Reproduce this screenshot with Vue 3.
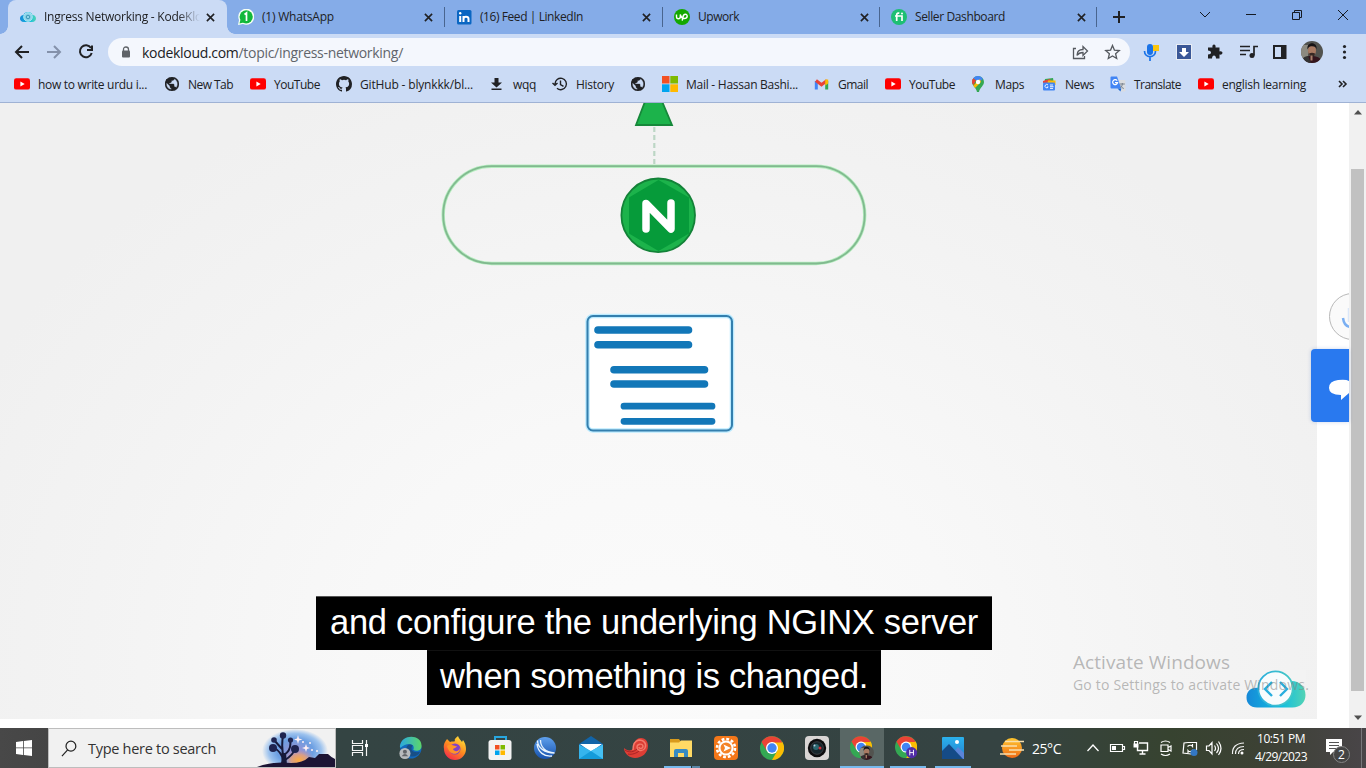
<script setup>
const vFit = {
  mounted(el, { value }) {
    if (!value) return
    const natural = el.getBoundingClientRect().width
    el.style.letterSpacing = (value - natural) / el.textContent.length + 'px'
  },
}

const tabs = [
  { icon: 'kode', title: 'Ingress Networking - KodeKlo', fit: 158, width: 219, active: true },
  { icon: 'whatsapp', title: '(1) WhatsApp', fit: 72, width: 218 },
  { icon: 'linkedin', title: '(16) Feed | LinkedIn', fit: 103, width: 218 },
  { icon: 'upwork', title: 'Upwork', fit: 41, width: 217 },
  { icon: 'fiverr', title: 'Seller Dashboard', fit: 90, width: 217 },
]

const bookmarks = [
  { icon: 'youtube', label: 'how to write urdu i...', fit: 109, width: 150 },
  { icon: 'globe', label: 'New Tab', fit: 45, width: 86 },
  { icon: 'youtube', label: 'YouTube', fit: 46, width: 86 },
  { icon: 'github', label: 'GitHub - blynkkk/bl...', fit: 113, width: 153 },
  { icon: 'download', label: 'wqq', fit: 23, width: 63 },
  { icon: 'history', label: 'History', fit: 38, width: 78 },
  { icon: 'globe', label: '', fit: 0, width: 32 },
  { icon: 'microsoft', label: 'Mail - Hassan Bashi...', fit: 112, width: 152 },
  { icon: 'gmail', label: 'Gmail', fit: 30, width: 71 },
  { icon: 'youtube', label: 'YouTube', fit: 46, width: 86 },
  { icon: 'maps', label: 'Maps', fit: 29, width: 70 },
  { icon: 'news', label: 'News', fit: 29, width: 69 },
  { icon: 'translate', label: 'Translate', fit: 47, width: 88 },
  { icon: 'youtube', label: 'english learning', fit: 84, width: 127 },
]

const apps = [
  { icon: 'edge' }, { icon: 'firefox' }, { icon: 'store' }, { icon: 'waves' },
  { icon: 'mail' }, { icon: 'shell' }, { icon: 'explorer', state: 'stacked' },
  { icon: 'sun' }, { icon: 'chrome' }, { icon: 'camera' },
  { icon: 'chrome-user', state: 'current' }, { icon: 'chrome-h', state: 'open' },
  { icon: 'photos', state: 'open' },
]

const tray = ['chevron', 'battery', 'network', 'meet', 'sync', 'speaker', 'wifi']
</script>

<template>
  <div class="screen">
    <svg class="defs" width="0" height="0">
      <defs>
        <linearGradient id="g-cloud" x1="0" x2="1"><stop offset="0" stop-color="#1689d8" /><stop offset=".6" stop-color="#12bfe0" /><stop offset="1" stop-color="#53d3b4" /></linearGradient>
        <linearGradient id="g-ring" x1="0" x2="1"><stop offset="0" stop-color="#2aaede" /><stop offset="1" stop-color="#45c9c4" /></linearGradient>
        <linearGradient id="g-edge" x1="0" x2="1"><stop offset="0" stop-color="#2aa8e0" /><stop offset="1" stop-color="#5cd66a" /></linearGradient>
        <linearGradient id="g-fox" x1=".8" y1="0" x2=".2" y2="1"><stop offset="0" stop-color="#ffe63c" /><stop offset=".5" stop-color="#ff8a1f" /><stop offset="1" stop-color="#f4234f" /></linearGradient>
        <linearGradient id="g-wave" x1="0" y1="0" x2="0" y2="1"><stop offset="0" stop-color="#5fa0ec" /><stop offset="1" stop-color="#1551ad" /></linearGradient>
        <linearGradient id="g-photo" x1="0" y1="0" x2="0" y2="1"><stop offset="0" stop-color="#2bb1ec" /><stop offset="1" stop-color="#2380d0" /></linearGradient>
        <linearGradient id="g-sun" x1="0" y1="0" x2="0" y2="1"><stop offset="0" stop-color="#ffc62e" /><stop offset="1" stop-color="#ef6a17" /></linearGradient>
        <radialGradient id="g-sky"><stop offset="0" stop-color="#9d8fd0" /><stop offset=".55" stop-color="#6c9fe2" /><stop offset=".8" stop-color="#9cc2ee" /><stop offset="1" stop-color="#f1f1f1" /></radialGradient>
        <radialGradient id="g-dusk"><stop offset="0" stop-color="#ffab3d" /><stop offset=".5" stop-color="#f0a070" stop-opacity=".8" /><stop offset="1" stop-color="#c08fc0" stop-opacity="0" /></radialGradient>
        <clipPath id="c-face"><circle cx="11" cy="11" r="11" /></clipPath>
      </defs>
      <symbol id="kode" viewBox="0 0 60 40"><path d="M11 37.500C4 37.500 .5 33 .5 27.500c0-6 4-10 11.500-10C14 7 20 .5 29.500 .5c8 0 14 4 16 10.500 8 0 14 6 14 14 0 7-5 12.500-13 12.500z" fill="url(#g-cloud)" /><path d="M-2-4H62V10.500H45L29.500 18 12 17.500H-2z" fill="#f3f3f3" /><circle cx="29.500" cy="18.500" r="17.200" fill="#f8fcfd" stroke="url(#g-ring)" stroke-width="1.800" /><path d="m26 12-7 7 7 7m8-14 7 7-7 7" fill="none" stroke="#27aede" stroke-width="2.400" /></symbol>
      <symbol id="kode-tab" viewBox="0 0 16 16"><path d="M4 13C1 13 0 11 0 9.500c0-2 1.500-3.500 3.500-3.500C4 4 6 3 8 3s4 1 4.500 3C15 6 16 8 16 9.500S15 13 12 13z" fill="url(#g-cloud)" /><circle cx="8" cy="8" r="4.300" fill="#8ed4ea" stroke="#a8e7f1" /><circle cx="8" cy="8" r="1.800" fill="none" stroke="#3a95b5" /></symbol>
      <symbol id="whatsapp" viewBox="0 0 16 16"><path d="M0 16 1 11A8 8 0 1 1 5 15z" fill="#f5fff5" /><circle cx="8.200" cy="7.800" r="6.600" fill="#12b83b" /><path d="m1.500 14.500 1-4 3 3z" fill="#12b83b" /><path d="m6.500 5.500 2-1.500v8" fill="none" stroke="#fff" stroke-width="1.700" /></symbol>
      <symbol id="linkedin" viewBox="0 0 16 16"><rect x="1" y="1" width="14.500" height="14.500" rx="1.500" fill="#0a66c2" /><path d="M4.200 7v6M7.500 13V7m0 3c0-3 5-3 5 0v3" fill="none" stroke="#fff" stroke-width="2" /><circle cx="4.200" cy="4.300" r="1.200" fill="#fff" /></symbol>
      <symbol id="upwork" viewBox="0 0 16 16"><circle cx="8" cy="8" r="8" fill="#14a800" /><path d="M2.500 5.500v2.300c0 2.600 3.800 2.600 3.800 0V5.500C7 8 8 9.500 10.200 9.500c3.800 0 3.800-4.300 1-4.300-2 0-2.300 2-3 6.500" fill="none" stroke="#fff" stroke-width="1.400" /></symbol>
      <symbol id="fiverr" viewBox="0 0 16 16"><circle cx="8" cy="8" r="8" fill="#1dbf73" /><path d="M5.700 12V6.300C5.700 4 7 4 8.300 4.200M4 7h7v5" fill="none" stroke="#fff" stroke-width="1.700" /><circle cx="11" cy="4.500" r="1" fill="#fff" /></symbol>
      <symbol id="youtube" viewBox="0 0 16 16"><rect y="2.300" width="16" height="11.300" rx="2.200" fill="#f00" /><path d="m6.400 5.400 4.300 2.600-4.300 2.600z" fill="#fff" /></symbol>
      <symbol id="globe" viewBox="2 2 20 20"><path d="M12 2C6.480 2 2 6.480 2 12s4.480 10 10 10 10-4.480 10-10S17.520 2 12 2zm-1 17.930c-3.950-.49-7-3.850-7-7.930 0-.62.08-1.210.21-1.790L9 15v1c0 1.100.9 2 2 2v1.930zm6.900-2.540c-.26-.81-1-1.390-1.900-1.390h-1v-3c0-.55-.45-1-1-1H8v-2h2c.55 0 1-.45 1-1V7h2c1.100 0 2-.9 2-2v-.41c2.930 1.190 5 4.060 5 7.410 0 2.080-.8 3.970-2.100 5.390z" fill="#202124" stroke="#202124" stroke-width=".5" /><path d="M4 5h7v4l-3 2-5-1z" fill="#202124" /></symbol>
      <symbol id="github" viewBox="0 0 16 16"><path fill="#202124" d="M8 0C3.580 0 0 3.580 0 8c0 3.540 2.290 6.530 5.470 7.590.4.070.55-.17.55-.38 0-.19-.01-.82-.01-1.490-2.010.37-2.530-.49-2.690-.94-.09-.23-.48-.94-.82-1.130-.28-.15-.68-.52-.01-.53.63-.01 1.080.58 1.230.82.72 1.210 1.870.87 2.330.66.07-.52.28-.87.51-1.070-1.780-.2-3.640-.89-3.640-3.950 0-.87.31-1.590.82-2.150-.08-.2-.36-1.020.08-2.120 0 0 .67-.21 2.200.82a7.600 7.600 0 0 1 4 0c1.530-1.040 2.200-.82 2.200-.82.44 1.100.16 1.920.08 2.120.51.56.82 1.270.82 2.150 0 3.070-1.870 3.750-3.650 3.950.29.25.54.73.54 1.480 0 1.070-.01 1.930-.01 2.200 0 .21.15.46.55.38A8 8 0 0 0 16 8c0-4.420-3.580-8-8-8z" /></symbol>
      <symbol id="download" viewBox="0 0 16 16"><path d="M5.500 2h4v4.500H13L7.500 11.500 2 6.500h3.500zM2.500 12.500h10V14h-10z" fill="#202124" /></symbol>
      <symbol id="history" viewBox="0 0 16 16"><path d="M3 8a5.700 5.700 0 1 1 2 4.300M.5 7 3 9.300 5.500 7M8.500 4.500v4l3 1.800" fill="none" stroke="#202124" stroke-width="1.400" /></symbol>
      <symbol id="microsoft" viewBox="0 0 16 16"><path fill="#f25022" d="M0 0h7.500v7.500H0z" /><path fill="#7fba00" d="M8.300 0H16v7.500H8.300z" /><path fill="#00a4ef" d="M0 8.300h7.500V16H0z" /><path fill="#ffb900" d="M8.300 8.300H16V16H8.300z" /></symbol>
      <symbol id="gmail" viewBox="0 0 16 16"><path d="M2.300 13.500V5" stroke="#4285f4" stroke-width="3" /><path d="M12.700 13.500V5" stroke="#34a853" stroke-width="3" /><path d="m2 4.500 5.500 4.300L13 4.500" fill="none" stroke="#ea4335" stroke-width="3" /><path d="M11.200 3.500h3v4l-3 2z" fill="#fbbc04" /></symbol>
      <symbol id="maps" viewBox="0 0 16 16"><path d="M7 0a6 6 0 0 0-6 6c0 4 4 5 5 10h2c1-5 5-6 5-10a6 6 0 0 0-6-6" fill="#34a853" /><path d="M1 6a6 6 0 0 1 1.400-4L5 4.500 2.500 9Q1 8 1 6" fill="#ea4335" /><path d="M2.200 2.200A6 6 0 0 1 12 3L8 6z" fill="#4285f4" /><path d="M2.300 9.400 9 3l1 3-6 6z" fill="#fbbc04" /><circle cx="7" cy="6" r="2.200" fill="#fff" /></symbol>
      <symbol id="news" viewBox="0 0 16 16"><path d="m4 3 8-1 1 6H3z" fill="#34a853" /><path d="M2 5 9 3l2 4H2z" fill="#ea4335" /><path d="M7 4.500h7.500V9H6z" fill="#fbbc04" /><rect x="2" y="6.500" width="12" height="8" rx="1" fill="#4285f4" /><path d="M7 9a1.700 1.700 0 1 0 .2 2H6M9 9h3M9 10.700h3.500M9 12.400h3" stroke="#fff" fill="none" stroke-width=".9" /></symbol>
      <symbol id="translate" viewBox="0 0 16 16"><path d="M8 4h6.500q1 0 1 1v9.500q0 1-1 1H11z" fill="#dadce0" /><path d="M1 .5h6l4.300 12H1.500q-1 0-1-1V1.500q0-1 1-1" fill="#4285f4" /><path d="m7.500 12.500 3.800 0L10.500 15.500z" fill="#1967d2" /><path d="M7.200 4.700a2.500 2.500 0 1 0 .4 2H5" fill="none" stroke="#fff" stroke-width="1.200" /><path d="M9.800 8h5m-2.500-1v1c0 2-1 3-2 4m.5-2.500c.5 1.500 1.500 2.500 3 3" fill="none" stroke="#78828e" /></symbol>
      <symbol id="chrome" viewBox="0 0 24 24"><circle cx="12" cy="12" r="12" fill="#34a853" /><path d="M22.400 6A12 12 0 0 1 12 24l5.200-9L12 6z" fill="#fbbc04" /><path d="M1.600 6A12 12 0 0 1 22.400 6.500H12L6.800 15z" fill="#ea4335" /><circle cx="12" cy="12" r="6" fill="#fff" /><circle cx="12" cy="12" r="4.700" fill="#4285f4" /></symbol>
      <symbol id="face" viewBox="0 0 22 22"><g clip-path="url(#c-face)"><path fill="#52534f" d="M0 0h22v22H0z" /><path d="M0 4h7v14H0z" fill="#8c8a80" /><path d="M2 22c0-6 4-7 8-7 5 0 10 1 12 7z" fill="#35151d" /><path d="M0 22q0-6 7-7l3 7z" fill="#333" /><ellipse cx="11" cy="9.500" rx="4" ry="5.500" fill="#a97a62" /><path d="M6.500 8.500C5 0 17 0 15.500 8.500 15 6 14 5.200 11 5.200S7.500 6 6.500 8.500" fill="#171416" /><path d="M8 12.500q3-1.500 6 0c0 4-5 4.500-6 0" fill="#372823" /><path d="M9.500 14.500h2v5h-2z" fill="#aa806b" /></g></symbol>
      <symbol id="chrome-user" viewBox="0 0 26 26"><use href="#chrome" width="24" height="24" /><use href="#face" x="10" y="10" width="16" height="16" /></symbol>
      <symbol id="chrome-h" viewBox="0 0 26 26"><use href="#chrome" width="24" height="24" /><circle cx="18" cy="18" r="6" fill="#512da8" /><path d="M16 15v6m4-6v6m-4-3h4" stroke="#fff" /></symbol>
      <symbol id="edge" viewBox="0 0 26 26"><circle cx="14" cy="13" r="11.500" fill="#1168bd" /><path d="M2 11C4-3 26-2 25.500 11c0 5-6 6-9 4 3-7-7-9-14-2z" fill="url(#g-edge)" /><path d="M9 14c0-4 3-6 7-4-4 5 1 9 8 7-3 7-15 8-15-3" fill="#184f86" /><circle cx="7.500" cy="19" r="6" fill="#b8bbbd" /><circle cx="7.500" cy="17" r="2.200" fill="#626569" /><path d="M4 22q3.500-5 7 0z" fill="#626569" /></symbol>
      <symbol id="firefox" viewBox="0 0 24 24"><path d="M1 13C0 7 3 5 4 3l3 3c2-1 4 0 5-1-1-2 1-3 3-5 1 3 3 4 4 6l1-2c3 4 3 8 3 9a11 11 0 0 1-22 0" fill="url(#g-fox)" /><circle cx="12" cy="13" r="5.500" fill="#8242c5" /><path d="M4 10c5-3 7 1 10 0-1 2-3 2-4 3 1 3 6 3 7-1 1 6-10 10-13-2" fill="#ff9426" /></symbol>
      <symbol id="store" viewBox="0 0 24 24"><path d="M7 5V1h11v4" fill="none" stroke="#28a7df" stroke-width="2" /><rect x=".5" y="4" width="23" height="20" rx="2.500" fill="#f3f3f3" /><path fill="#f25022" d="M7 9h4.500v4.500H7z" /><path fill="#7fba00" d="M12.500 9H17v4.500h-4.500z" /><path fill="#00a4ef" d="M7 14.500h4.500V19H7z" /><path fill="#ffb900" d="M12.500 14.500H17V19h-4.500z" /></symbol>
      <symbol id="waves" viewBox="0 0 24 24"><circle cx="12" cy="12" r="11" fill="url(#g-wave)" /><path d="M4.500 4.500c0 7 7 12.500 17 12.500-9-1-14-6-14-13M4 8c1 8 7 13 15 12" fill="none" stroke="#e9f4fd" stroke-width="1.300" /></symbol>
      <symbol id="mail" viewBox="0 0 24 24"><path d="M0 8 12 0l12 8v5H0z" fill="#1264a8" /><path d="M1 8h22L12 16z" fill="#fff" /><path d="m0 8.500 12 6.500 12-6.500V23H0z" fill="#35b4ed" /><path d="m12 15 12-6.500V23L10 16z" fill="#45c0f3" /><path d="m0 23 12-8 12 8z" fill="#159bd9" /></symbol>
      <symbol id="shell" viewBox="0 0 24 24"><path d="M0 12c3 3 7 3 9 1 0-5 2-11 8-11 5 0 7 4 7 8 0 7-6 12-13 12-5 0-11-4-11-10" fill="#dd3e35" /><path d="M9 14c0-4 1-9 6-10 5 0 8 4 6 8-2 4-8 3-8-1 0-3 5-4 6-1 0 3-4 3-4 1" fill="none" stroke="#f37b6c" stroke-width="1.400" /><path d="M1 14c4 3 9 2 12-1M4 18c4 1 9-1 11-3" fill="none" stroke="#a92224" /></symbol>
      <symbol id="explorer" viewBox="0 0 24 24"><path d="M1 3h9l2 3h11v15H1z" fill="#d99b1d" /><path d="M1 6.500h9l2-2h11V21H1z" fill="#ffda65" /><path d="M5 21v-6q0-2 2-2h10q2 0 2 2v6h-4v-4H9v4z" fill="#378bc2" /></symbol>
      <symbol id="sun" viewBox="0 0 24 24"><rect width="24" height="24" rx="4" fill="#f47719" /><circle cx="12" cy="12" r="9" fill="none" stroke="#fff" stroke-width="2.600" stroke-dasharray="2.800 1.912" /><circle cx="12" cy="12" r="7.600" fill="#fff" /><circle cx="12" cy="12" r="5.500" fill="#f48226" /><path d="m9.500 8.500 7.500 3.500-7.500 3.500 1.500-3.500z" fill="#fff" /></symbol>
      <symbol id="camera" viewBox="0 0 24 24"><rect width="24" height="24" rx="4" fill="#d9d6d5" /><circle cx="12" cy="12" r="9.200" fill="#0c0c0e" /><circle cx="12" cy="12" r="6.300" fill="#16262c" stroke="#46474c" stroke-width=".8" /><circle cx="11" cy="11" r="3" fill="#2d6871" /><circle cx="9.500" cy="9.500" r="1" fill="#bcd" /><circle cx="15" cy="12" r="1.500" fill="#d2303b" /></symbol>
      <symbol id="photos" viewBox="0 0 24 24"><rect x="1" y="1" width="22" height="22" rx="1" fill="url(#g-photo)" /><path d="m11 18 6-7 6 6v6H11z" fill="#5b84d8" /><path d="m1 15 7-7 14 15H1z" fill="#154b87" /><circle cx="16" cy="6" r="2" fill="#fff" /></symbol>
      <symbol id="chevron" viewBox="0 0 20 20"><path d="m4.500 13 5.500-6 5.500 6" fill="none" stroke="#fff" stroke-width="1.300" /></symbol>
      <symbol id="battery" viewBox="0 0 20 20"><path d="M3.500 6.500h12v7h-12zM16 8.500h1.500v3H16" fill="none" stroke="#fff" stroke-width="1.200" /><path d="M5 8h4v4H5z" fill="#fff" /></symbol>
      <symbol id="network" viewBox="0 0 20 20"><path d="M8 5h8.500v7.500H6.500V9M11.500 13v3m-3 0h6" fill="none" stroke="#fff" stroke-width="1.400" /><path d="M2.500 5.500h5v4h-5z" fill="#fff" /><path d="M3.500 6V3.500h3V6" fill="none" stroke="#fff" stroke-width="1.200" /></symbol>
      <symbol id="meet" viewBox="0 0 20 20"><path d="M5 7h7v6.500H5zM12.500 9.300 15 8v5l-2.500-1.300M5 4.500q4.500-3 9 0M5 16q4.500 3 9 0" fill="none" stroke="#fff" stroke-width="1.200" /></symbol>
      <symbol id="sync" viewBox="0 0 20 20"><path d="M8 4.500h8.500V12M11 16l-8-1 1-10 4-.5M7.500 8.500q3-2.500 5 0V6m.5 6q-3 3-5 .5V15" fill="none" stroke="#fff" stroke-width="1.200" /><circle cx="14" cy="14.500" r="3.500" fill="#3378c4" /></symbol>
      <symbol id="speaker" viewBox="0 0 20 20"><path d="M2.500 8h2.500l3-3.500v11.500L5 12.500H2.500zM10.500 7.500q2 3 0 5.500m2-7.500q4 5 0 9.500m2-11.500q5 7 0 13.500" fill="none" stroke="#fff" stroke-width="1.200" /></symbol>
      <symbol id="wifi" viewBox="0 0 20 20"><path d="M4.500 16Q4 5.500 16 5M7.500 16q0-7.500 8.500-7.500M10.500 16q0-4.500 5.500-4.500" fill="none" stroke="#f4f4f4" stroke-width="1.200" /><circle cx="14" cy="15" r="1.500" fill="#fff" /></symbol>
    </svg>

    <header class="browser">
      <div class="tabstrip">
        <div v-for="t in tabs" :key="t.icon" class="tab" :class="{ active: t.active }" :style="{ width: t.width + 'px' }">
          <svg class="i16"><use :href="t.active ? '#kode-tab' : '#' + t.icon" /></svg>
          <div class="title"><span v-fit="t.fit">{{ t.title }}</span></div>
          <svg class="close" viewBox="0 0 10 10"><path d="m1 1 8 8m0-8L1 9" /></svg>
        </div>
        <svg class="plus" viewBox="0 0 12 12"><path d="M6 0v12M0 6h12" /></svg>
        <svg class="window" viewBox="0 0 152 16">
          <path d="m8 6 5 5 5-5M54 8.500h10M100.500 6.500h7v7h-7zM102.500 6.500v-2h7v7h-2M146 4l10 10m0-10-10 10" />
        </svg>
      </div>

      <div class="toolbar">
        <svg class="nav" viewBox="0 0 100 36">
          <path d="M29 18H16m6-6-6 6 6 6" stroke="#202124" />
          <path d="M47 18h13m-6-6 6 6-6 6" stroke="#8491aa" />
          <path d="M91 14a6 6 0 1 0 .7 5M92 11.500V16h-5" stroke="#202124" />
        </svg>
        <div class="address">
          <svg class="lock" viewBox="0 0 10 12"><path d="M2.500 5V3.500q0-2.500 2.500-2.500t2.500 2.500V5" fill="none" stroke="#5f6368" stroke-width="1.300" /><rect x="1" y="4.500" width="8" height="7" rx="1" fill="#5f6368" /></svg>
          <span v-fit="261" class="url">kodekloud.com<i>/topic/ingress-networking/</i></span>
          <svg class="actions" viewBox="0 0 48 18"><path d="M4 5.500H1.500v10h11V13M5 12.500q0-6 6-6v-3l4.500 4.500-4.500 4.500v-3q-4 0-6 3M40.500 2.500l1.900 4.600 4.900.4-3.700 3.200 1.100 4.800-4.200-2.600-4.200 2.600 1.100-4.800-3.700-3.200 4.900-.4z" /></svg>
        </div>
        <svg class="extensions" viewBox="0 0 236 36">
          <rect x="17" y="10" width="6" height="11" rx="3" fill="#1a73e8" /><path d="M14.500 17c0 7.500 11 7.500 11 0m-5.500 5.500v4.500" fill="none" stroke="#1a73e8" stroke-width="1.700" /><rect x="23" y="11" width="6" height="6" fill="#fbc50d" />
          <rect x="46.500" y="10.500" width="15" height="15" fill="#3a5797" stroke="#e9edf4" /><path d="M52 14h4v4h3l-5 5-5-5h3z" fill="#fff" />
          <path d="M79 13.500h3.500c-1-4 4-4 3 0h4v4c4-1 4 4 0 3v4h-3.500c0-4-4-4-4 0h-4v-4c4 0 4-4 0-4v-3z" fill="#202124" />
          <path d="M110 12.500h10m-10 4h10m-10 4h6m8 1v-9h4" fill="none" stroke="#202124" stroke-width="1.700" /><circle cx="122" cy="21.500" r="2.500" fill="#202124" />
          <path d="M144 12h11.500v12H144z" fill="none" stroke="#202124" stroke-width="2" /><path d="M151 12h4.500v12H151z" fill="#202124" />
          <use href="#face" x="171" y="7" width="22" height="22" />
          <g fill="#202124"><circle cx="214.500" cy="12.500" r="1.600" /><circle cx="214.500" cy="18" r="1.600" /><circle cx="214.500" cy="23.500" r="1.600" /></g>
        </svg>
      </div>

      <nav class="bookmarks">
        <div v-for="(b, n) in bookmarks" :key="n" class="bookmark" :style="{ width: b.width + 'px' }">
          <svg class="i16" :class="{ globe: b.icon === 'globe' }"><use :href="'#' + b.icon" /></svg>
          <span v-if="b.label" v-fit="b.fit">{{ b.label }}</span>
        </div>
        <svg class="more" viewBox="0 0 10 8"><path d="m1 1 3 3-3 3m4-6 3 3-3 3" /></svg>
      </nav>
    </header>

    <main class="page">
      <section class="slide">
        <svg class="diagram" viewBox="0 103 1317 616">
          <path d="m646 99-10 26h36l-11-26z" fill="#1cb34b" stroke="#16883a" stroke-width="1.800" />
          <path d="M654.300 127v38" stroke="#bcd6c5" stroke-width="2.200" stroke-dasharray="5 3" />
          <rect x="443.200" y="166.200" width="421.500" height="97.300" rx="48.600" fill="none" stroke="#b4edbe" stroke-width="3.400" />
          <rect x="443.200" y="166.200" width="421.500" height="97.300" rx="48.600" fill="none" stroke="#81b98f" stroke-width="1.800" />
          <circle cx="658.200" cy="215.300" r="36.800" fill="#1cb34b" stroke="#138238" stroke-width="1.800" />
          <path d="m658.500 180 30.500 17.500v36L658.500 251 629 233.500v-36z" fill="#069b3a" />
          <path d="M646 229v-25.500l25 25.500v-26" fill="none" stroke="#fff" stroke-width="7.500" stroke-linecap="round" stroke-linejoin="round" />
          <rect x="587.500" y="316" width="144.500" height="114.500" rx="5.500" fill="#fff" stroke="#bcebff" stroke-width="4.500" />
          <rect x="587.500" y="316" width="144.500" height="114.500" rx="5.500" fill="none" stroke="#347fae" stroke-width="2" />
          <path d="M598 330h90.500M598 344.700h90.500M614 369.700h90.500M614 384h90.500" stroke="#1277b8" stroke-width="7.600" stroke-linecap="round" />
          <path d="M624 406.200h88M624 421.300h88" stroke="#1277b8" stroke-width="6.800" stroke-linecap="round" />
        </svg>
        <div class="captions">
          <p class="first"><span v-fit="648">and configure the underlying NGINX server</span></p>
          <p class="second"><span v-fit="428">when something is changed.</span></p>
        </div>
        <svg class="brand"><use href="#kode" /></svg>
        <div class="watermark">
          <p><span v-fit="157">Activate Windows</span></p>
          <p class="small"><span v-fit="236">Go to Settings to activate Windows.</span></p>
        </div>
      </section>

      <svg class="voice" viewBox="0 0 20 48"><circle cx="23.500" cy="23.500" r="23" fill="#fafafa" stroke="#b8b8b8" /><path d="M14 25q1 8 7 9" fill="none" stroke="#7aaff2" stroke-width="2.500" /><path d="M19.500 15v14" stroke="#dbe7f8" stroke-width="1.500" /></svg>
      <div class="chat"><svg viewBox="0 0 38 74"><path d="M38 32q-3-2-11-1-9 1-9 8 0 7 12 7v5l8-7z" fill="#fff" /></svg></div>
      <div class="scroll">
        <svg viewBox="0 0 10 6"><path d="M1 5.500h8L5 1z" /></svg>
        <div class="thumb"></div>
        <svg viewBox="0 0 10 6"><path d="M1 .5h8L5 5z" /></svg>
      </div>
    </main>

    <footer class="taskbar">
      <div class="start"><svg viewBox="0 0 16 16"><path d="m0 2 7-1v6.500H0zM7.800.9 16 0v7.500H7.800zM0 8.300h7V15l-7-1zM7.800 8.300H16V16l-8.200-1z" /></svg></div>
      <div class="search">
        <svg class="glass" viewBox="0 0 18 18"><circle cx="10.500" cy="6.500" r="5.200" /><path d="m7 10.500-6 6.500" /></svg>
        <span v-fit="128">Type here to search</span>
        <svg class="tree" viewBox="0 0 78 38">
          <ellipse cx="38" cy="22" rx="33" ry="22" fill="url(#g-sky)" />
          <ellipse cx="42" cy="31" rx="16" ry="11" fill="url(#g-dusk)" />
          <path d="M25 35q3-10-9-17m11 12q-3-10-1-24m2 25q8-5 10-11m-11 6q8-5 6-15M25 20l-8-9" stroke="#171a3b" stroke-width="2" fill="none" />
          <path d="m24 36 2-12h3l1 12z" fill="#171a3b" />
          <g fill="#1f2450"><circle cx="26" cy="6.500" r="3.200" /><circle cx="17" cy="11" r="2.800" /><circle cx="33.500" cy="11" r="2.600" /><circle cx="16" cy="19" r="4" /><circle cx="38" cy="20" r="4" /></g>
          <g fill="#fff0f4"><path d="m41 6 1 3.500 3.500 1-3.500 1-1 3.500-1-3.500-3-1 3-1zM49 15l1 3 3 1-3 1-1 3-1-3-3-1 3-1z" /><circle cx="53" cy="14" r="1" /><circle cx="55" cy="21" r="1" /><circle cx="60" cy="22" r="1" /><circle cx="46" cy="13" r="1" /></g>
          <path d="M0 38q15-6 34-4 12 0 18-6l6 1 4-4 9 0q4 4 7 5v8z" fill="#1c1434" />
        </svg>
      </div>
      <div class="taskview"><svg viewBox="0 0 18 18"><path d="M1.500 1v3.500h10V1M1.500 17v-3.500h10V17M1.500 6.500h10v5h-10zM15.500 1v16" fill="none" stroke="#f4f4f4" stroke-width="1.200" /><path d="M14 5h3v3h-3z" fill="#fff" /></svg></div>
      <div class="apps">
        <div v-for="a in apps" :key="a.icon" class="app" :class="a.state">
          <svg><use :href="'#' + a.icon" /></svg>
        </div>
      </div>
      <div class="weather">
        <svg viewBox="0 0 24 22"><circle cx="12" cy="11" r="10" fill="url(#g-sun)" /><path d="M5 4.500h19M1 9h16M9 13h15M0 17h16" stroke="#f8dfae" stroke-width="1.700" /></svg>
        <span v-fit="29">25°C</span>
      </div>
      <div class="tray"><svg v-for="i in tray" :key="i"><use :href="'#' + i" /></svg></div>
      <div class="clock"><span><b v-fit="48">10:51 PM</b></span><span><b v-fit="52">4/29/2023</b></span></div>
      <div class="notice">
        <svg viewBox="0 0 28 28"><path d="M3 3h16v13H10l-3 3v-3H3z" fill="#fff" /><path d="M6 6.500h10M6 9.500h10M6 12.500h7" stroke="#555" /><circle cx="18.500" cy="18.500" r="8" fill="#444" stroke="#858585" /></svg>
        <em>2</em>
      </div>
    </footer>
  </div>
</template>

<style>
body { margin: 0; overflow: hidden; }
</style>

<style scoped>
* { box-sizing: border-box; }
svg { display: block; flex: none; overflow: visible; }
p { margin: 0; }
i, em, b { font-style: normal; font-weight: 400; }
span { white-space: nowrap; }
.screen { width: 1366px; height: 768px; display: flex; flex-direction: column; overflow: hidden; background: #fff; font-family: "Open Sans", "Noto Sans", sans-serif; font-size: 12px; color: #202124; }
.defs { position: absolute; }
.i16 { width: 16px; height: 16px; }

.browser { height: 103px; flex: none; background: #cbdbf5; border-bottom: 1px solid #9fb2d4; }
.tabstrip { height: 34px; padding-left: 8px; display: flex; background: #85ace8; position: relative; }
.tab { display: flex; align-items: center; padding-left: 11px; position: relative; }
.tab.active { background: #cbdbf5; border-radius: 8px 8px 0 0; padding-left: 12px; }
.tab.active::before, .tab.active::after { content: ""; position: absolute; bottom: 0; width: 8px; height: 8px; }
.tab.active::before { left: -8px; background: radial-gradient(circle at 0 0, transparent 7.5px, #cbdbf5 8px); }
.tab.active::after { right: -8px; background: radial-gradient(circle at 100% 0, transparent 7.5px, #cbdbf5 8px); }
.tab:not(.active)::after { content: ""; position: absolute; right: 0; top: 7px; width: 1px; height: 20px; background: #49658f; }
.title { width: 158px; margin-left: 8px; line-height: 20px; }
.active .title { -webkit-mask-image: linear-gradient(90deg, #000 134px, transparent 156px); mask-image: linear-gradient(90deg, #000 134px, transparent 156px); }
.close { width: 9px; height: 9px; margin-left: 4px; stroke: #202124; stroke-width: 1.800; }
.plus { width: 12px; height: 12px; margin: 11px 0 0 16px; stroke: #202124; stroke-width: 2; }
.window { width: 152px; height: 16px; margin: 6px 0 0 67px; fill: none; stroke: #151a22; stroke-width: 1; }

.toolbar { height: 36px; display: flex; align-items: center; }
.nav { width: 100px; height: 36px; fill: none; stroke-width: 2; }
.address { width: 1022px; height: 28px; margin-left: 8px; border-radius: 14px; background: #f4f7fd; display: flex; align-items: center; padding-left: 13px; }
.lock { width: 10px; height: 12px; }
.url { margin-left: 11px; font-size: 14px; }
.url i { color: #61656b; }
.actions { width: 48px; height: 18px; margin-left: auto; margin-right: 10px; fill: none; stroke: #55595f; stroke-width: 1.300; }
.extensions { width: 236px; height: 36px; }

.bookmarks { height: 28px; display: flex; align-items: center; padding-left: 14px; }
.bookmark { display: flex; align-items: center; gap: 8px; flex: none; }
.globe { padding: 1px; }
.more { width: 10px; height: 8px; margin-left: 13px; fill: none; stroke: #202124; stroke-width: 1.600; }

.page { height: 625px; flex: none; position: relative; display: flex; justify-content: space-between; }
.slide { width: 1317px; height: 616px; position: relative; background: radial-gradient(ellipse 760px 640px at 50% 92%, #fbfbfb 0, #f8f8f8 40%, #f3f3f3 75%, #f0f0f0 100%); }
.diagram { width: 1317px; height: 616px; overflow: hidden; }
.captions { position: absolute; left: 316px; top: 493px; width: 676px; display: flex; flex-direction: column; align-items: center; font: 34.500px/51px "Liberation Sans", Arial, sans-serif; color: #fff; }
.captions p { background: #000; height: 54px; padding-left: 14px; border: 1px solid #555; border-width: 1px 0 0; }
.captions .first { width: 676px; }
.captions .second { width: 454px; height: 55px; padding-left: 13px; border-color: #111; }
.brand { position: absolute; left: 1246px; top: 567px; width: 60px; height: 40px; }
.watermark { position: absolute; left: 1073px; top: 546px; color: rgba(130, 130, 130, .55); font-size: 19px; line-height: 26px; }
.watermark .small { font-size: 14px; line-height: 20px; }
.voice { position: absolute; left: 1329px; top: 190px; width: 20px; height: 48px; overflow: hidden; }
.chat { position: absolute; left: 1311px; top: 246px; width: 38px; height: 73px; background: #2979ef; border-radius: 4px 0 0 4px; box-shadow: 0 0 4px rgba(0, 60, 160, .2); overflow: hidden; }
.scroll { width: 17px; display: flex; flex-direction: column; align-items: center; background: #f1f1f1; }
.scroll svg { width: 10px; height: 6px; margin: 6px 0 0; fill: #505050; }
.thumb { width: 13px; height: 522px; margin: 54px 0 18px; background: #c1c1c1; }

.taskbar { height: 40px; display: flex; align-items: stretch; color: #fff; background: linear-gradient(90deg, #484848 0, #454545 48px, #344443 336px, #354342 1000px, #374330 1170px, #3c4134 1260px, #494548 1366px); }
.start { width: 48px; display: grid; place-items: center; }
.start svg { width: 16px; height: 16px; fill: #fff; }
.search { width: 288px; display: flex; align-items: center; padding-left: 12px; background: #f1f1f1; border: 1px solid #bdbdbd; color: #333; font-size: 14.500px; overflow: hidden; }
.glass { width: 17px; height: 17px; margin-right: 10px; fill: none; stroke: #222; stroke-width: 1.300; }
.tree { width: 78px; height: 38px; margin-left: auto; overflow: hidden; }
.search span { flex: none; }
.taskview { width: 50px; display: flex; align-items: center; padding-left: 15px; }
.taskview svg { width: 18px; height: 18px; }
.apps { display: flex; width: 590px; flex: none; padding-left: 1px; }
.app { width: 45.250px; flex: none; display: grid; place-items: center; position: relative; }
.app svg { width: 24px; height: 24px; }
.app::after { position: absolute; left: 5px; right: 4px; bottom: 0; height: 2px; background: #76b9ed; }
.open::after, .current::after, .stacked::after { content: ""; }
.current { background: #596765; background-clip: padding-box; border-right: 1px solid transparent; }
.current::after { left: 0; right: 0; }
.stacked::after { background: linear-gradient(90deg, #76b9ed 27px, #253434 27px, #253434 28px, #5a87a7 28px); }
.weather { width: 104px; padding-left: 24px; display: flex; align-items: center; gap: 8px; font-size: 14px; }
.weather svg { width: 24px; height: 22px; }
.tray { width: 168px; display: flex; align-items: center; gap: 4.200px; padding-left: 3px; }
.tray svg { width: 20px; height: 20px; }
.clock { width: 66px; flex: none; display: flex; flex-direction: column; align-items: center; font-size: 12px; line-height: 18px; padding-top: 2px; }
.clock b { display: inline-block; }
.notice { position: relative; padding-left: 9px; flex: 1; display: flex; align-items: center; }
.notice svg { width: 28px; height: 28px; margin-top: 4px; }
.notice em { position: absolute; left: 23px; top: 17px; width: 9px; text-align: center; font-size: 12px; line-height: 19px; }
.notice::after { content: ""; position: absolute; right: 4px; top: 0; height: 40px; width: 1px; background: #77777a; }
</style>
